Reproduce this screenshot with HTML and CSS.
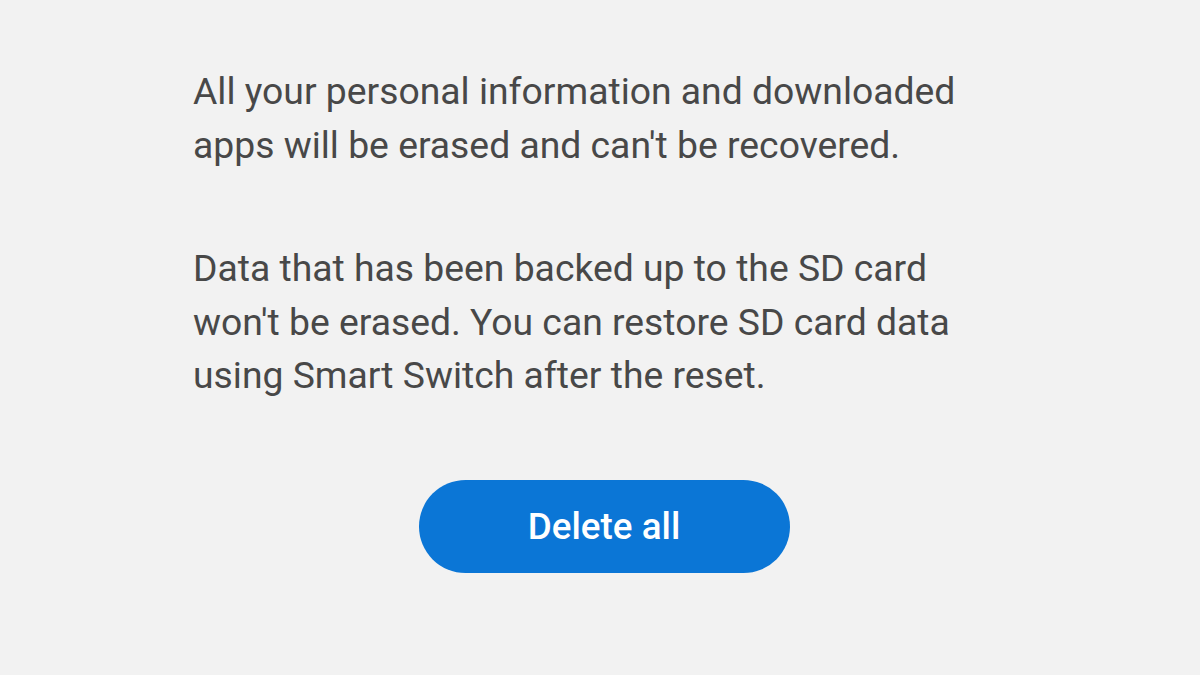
FILE: index.html
```html
<!DOCTYPE html>
<html>
<head>
<meta charset="utf-8">
<link rel="stylesheet" href="styles.css">
</head>
<body>
<main class="screen">
  <div class="content">
    <p class="para">All your personal information and downloaded apps will be erased and can't be recovered.</p>
    <p class="para">Data that has been backed up to the SD card won't be erased. You can restore SD card data using Smart Switch after the reset.</p>
    <div class="actions">
      <button class="btn">Delete all</button>
    </div>
  </div>
</main>
</body>
</html>
```
FILE: styles.css
```css
html, body {
  margin: 0;
  padding: 0;
  background: #f2f2f2;
}
.screen {
  width: 1200px;
  height: 675px;
  overflow: hidden;
  font-family: Roboto, "Noto Sans", sans-serif;
}
.content {
  width: 775px;
  margin-left: 193px;
  padding-top: 65px;
}
.para {
  margin: 0 0 70px 0;
  font-size: 37.3px;
  line-height: 53.5px;
  color: #484848;
}
.actions {
  display: flex;
  justify-content: center;
  width: 822px;
  padding-top: 7px;
}
.btn {
  width: 371px;
  height: 93px;
  border: none;
  border-radius: 47px;
  background: #0b76d6;
  color: #ffffff;
  font-family: Roboto, sans-serif;
  font-weight: 500;
  font-size: 36.8px;
}
```
